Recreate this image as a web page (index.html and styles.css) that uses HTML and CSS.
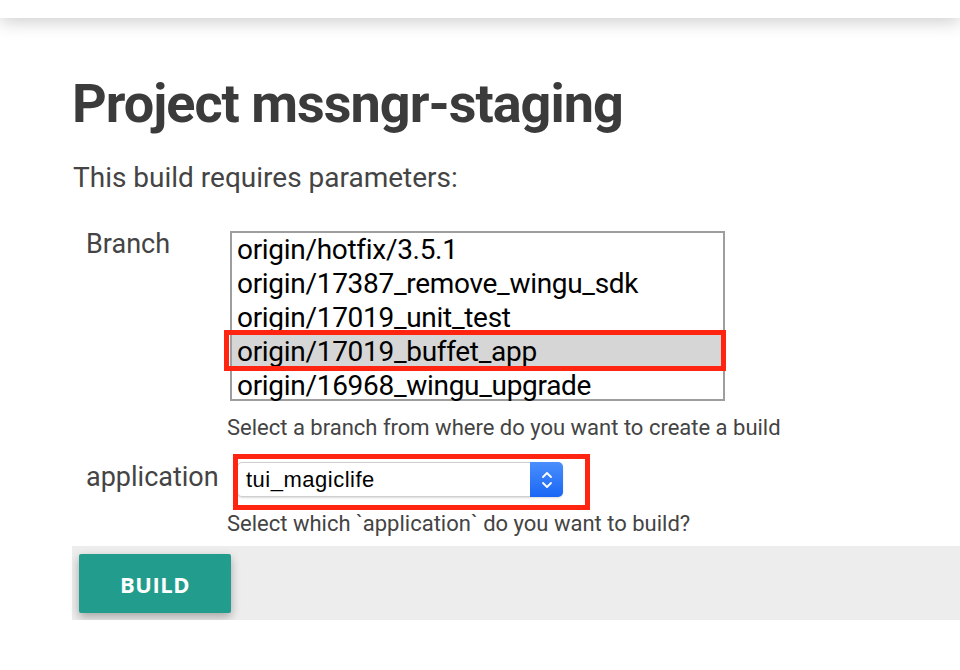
FILE: index.html
```html
<!DOCTYPE html>
<html lang="en">
<head>
    <meta charset="UTF-8">
    <meta name="viewport" content="width=device-width, initial-scale=1.0">
    <title>mssngr-staging</title>
    <link rel="stylesheet" href="styles.css">
</head>
<body>

    <div class="topbar"></div>

    <div class="main">
        <h1>Project mssngr-staging</h1>
        <p class="intro">This build requires parameters:</p>

        <div class="params">
            <div class="param-name">Branch</div>
            <div class="param-value">
                <div class="listbox">
                    <div class="option">origin/hotfix/3.5.1</div>
                    <div class="option">origin/17387_remove_wingu_sdk</div>
                    <div class="option">origin/17019_unit_test</div>
                    <div class="option selected">origin/17019_buffet_app</div>
                    <div class="option">origin/16968_wingu_upgrade</div>
                </div>
                <div class="help">Select a branch from where do you want to create a build</div>
            </div>

            <div class="param-name app-name">application</div>
            <div class="param-value">
                <div class="dropdown">
                    <span class="dropdown-text">tui_magiclife</span>
                    <span class="stepper">
                        <svg width="14" height="22" viewBox="0 0 14 22">
                            <path d="M3 8 L7 4 L11 8 M3 14 L7 18 L11 14" fill="none" stroke="#fff" stroke-width="1.8" stroke-linecap="round" stroke-linejoin="round"/>
                        </svg>
                    </span>
                </div>
                <div class="help help-app">Select which `application` do you want to build?</div>
            </div>
        </div>

        <div class="bottom-bar">
            <button type="button" class="build-btn">BUILD</button>
        </div>
    </div>

</body>
</html>
```

FILE: styles.css
```css
body {
    margin: 0;
    font-family: Roboto, "Liberation Sans", sans-serif;
    color: #444;
    background: #fff;
}
.topbar {
    height: 18px;
    background: #fff;
    box-shadow: 0 3px 18px rgba(0, 0, 0, 0.22);
}
.main {
    padding: 54px 0 0 72px;
}
h1 {
    margin: 0;
    font-size: 54px;
    font-weight: 700;
    line-height: 64px;
    letter-spacing: -1px;
    color: #3b3b3b;
}
.intro {
    margin: 24px 0 0 1px;
    font-size: 28px;
    line-height: 36px;
    color: #444;
}
.params {
    display: grid;
    grid-template-columns: 158px auto;
    margin-top: 31px;
}
.param-name {
    padding-left: 14px;
    font-size: 27px;
    line-height: 34px;
    color: #444;
}
.param-value {
    display: flex;
    flex-direction: column;
    align-items: flex-start;
}
.listbox {
    width: 491px;
    height: 166px;
    border: 2px solid #9e9e9e;
    background: #fff;
    margin-top: 4px;
}
.option {
    position: relative;
    padding-left: 5px;
    font-size: 28px;
    line-height: 34px;
    letter-spacing: -0.3px;
    color: #000;
}
.option.selected {
    background: #d6d6d6;
}
.option.selected::after {
    content: "";
    position: absolute;
    left: -8px;
    right: -3px;
    top: -5px;
    bottom: -2px;
    border: 5px solid #ff2511;
}
.help {
    margin: 14px 0 0 -3px;
    font-size: 22px;
    line-height: 26px;
    color: #444;
}
.help.help-app {
    margin-top: 14px;
}
.app-name {
    margin-top: 19px;
}
.dropdown {
    position: relative;
    display: flex;
    align-items: center;
    width: 324px;
    height: 33px;
    margin: 21px 0 0 7px;
    border: 1px solid #cfcfcf;
    border-radius: 5px;
    background: #fff;
    box-shadow: 0 1px 2px rgba(0, 0, 0, 0.15);
}
.dropdown::after {
    content: "";
    position: absolute;
    left: -5px;
    right: -28px;
    top: -9px;
    bottom: -14px;
    border: 5px solid #ff2511;
}
.dropdown-text {
    flex: 1;
    padding-left: 8px;
    font-family: "Liberation Sans", Arial, sans-serif;
    font-size: 22px;
    letter-spacing: 0.5px;
    color: #000;
}
.stepper {
    display: flex;
    align-items: center;
    justify-content: center;
    width: 33px;
    height: 35px;
    margin: -1px -1px -1px 0;
    border-radius: 0 5px 5px 0;
    background: linear-gradient(#4a8ffd, #1a66f5);
}
.bottom-bar {
    margin-top: 9px;
    height: 74px;
    background: #ededed;
    padding: 8px 0 0 7px;
    box-sizing: border-box;
}
.build-btn {
    width: 152px;
    height: 59px;
    border: none;
    border-radius: 2px;
    background: #229d8d;
    color: #fff;
    font-family: "Open Sans", sans-serif;
    font-size: 22px;
    font-weight: 700;
    letter-spacing: 0.5px;
    box-shadow: 0 4px 10px rgba(0, 0, 0, 0.3);
}
```
